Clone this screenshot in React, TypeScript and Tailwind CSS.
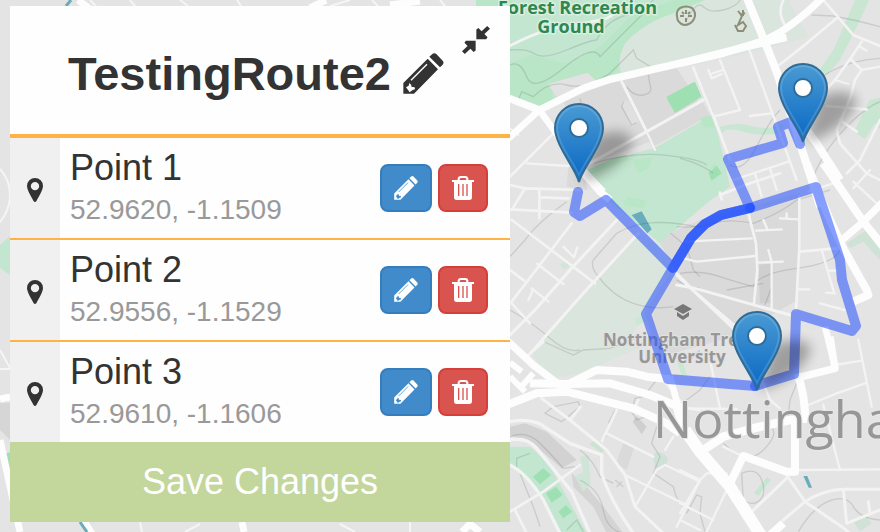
import React, { useState } from "react";

type Line = [number, string];
type Area = [string, string];

/* Each sheet is drawn at three units to the pixel from its own origin. */
interface Sheet {
  x: number;
  y: number;
  areas: Area[];
  contours: string[];
  minor: Line[];
  major: Line[];
}

const PARK = "#c3e6d0";
const WOOD = "#b9e6c6";
const PITCH = "#9fe0b3";
const COMMON = "#dae5dd";
const BUILT = "#dadada";
const WATER = "#69adbd";

const sheets: Sheet[] = [
  {
    x: 500,
    y: 0,
    areas: [
      [PARK, "M-10 -10H760L740 60L600 160L330 235L118 325L20 290Z"],
      [WOOD, "M20 195L90 165L200 190L300 140L380 60L430 30L560 -10H640L540 50L440 90L380 130L350 215L290 245L265 218L150 250L160 300L120 322L20 290Z"],
      [COMMON, "M375 130Q430 70 520 40L640 -10L860 -10L925 110L740 160L560 200L370 228Q345 190 375 130Z"],
      ["#e2e2e2", "M145 252L262 218L290 244L175 300Z"],
      [BUILT, "M190 305L330 245L530 205L560 250L610 330L450 425L270 490L240 400Z"],
      [BUILT, "M430 405L605 300L630 345L460 440Z"],
      ["#e0e0e0", "M362 310L385 300L418 365L395 378Z"],
      [PARK, "M255 510L300 500L400 460L460 446L635 345L655 405L690 560L620 610L480 730L300 580Z"],
      [WOOD, "M600 355L632 345L645 385L610 380Z"],
      [WOOD, "M405 480L455 470L450 500L420 520L402 500Z"],
      [WOOD, "M350 470L380 465L385 480L270 525L262 510Z"],
      [PITCH, "M500 295L580 247L600 290L525 338Z"],
    ],
    contours: [
      "M30 150Q80 145 105 162T200 150T290 120Q320 60 380 45T460 0",
      "M30 195Q60 180 80 230T190 205T300 170L350 120L450 20",
      "M55 300L65 275L100 290Q150 240 200 255T330 220L400 150L410 175L455 202",
      "M280 490Q400 455 500 466T620 495",
      "M370 305L365 320L395 375L410 368",
      "M380 260Q400 290 430 285T450 255L445 225",
      "M240 295L245 320",
    ],
    minor: [
      [8, "M25 140Q120 90 190 80T320 55L400 10"],
      [9, "M365 245L440 395"],
      [9, "M270 490L440 395L610 300"],
      [6, "M440 395L465 450"],
      [6, "M580 200L600 250L690 480"],
      [6, "M30 385L55 405"],
      [8, "M30 530L160 400"],
      [7, "M80 490L205 498"],
    ],
    major: [
      [22, "M20 292L118 330L250 265L330 238L560 185L740 140L860 112"],
      [20, "M118 330L20 420"],
      [20, "M118 330L165 395L240 500L310 575"],
    ],
  },
  {
    x: 680,
    y: 0,
    areas: [
      ["#c9e6d2", "M530 -10H572L545 50L480 180L440 225L415 215L460 150Z"],
      ["#c9e6d2", "M568 300L610 290V400L585 370L555 418L522 395Z"],
      ["#c9e6d2", "M120 380Q170 365 215 378T310 375L300 400Q240 410 190 395T125 400Z"],
      [PITCH, "M-40 290L45 245L65 290L-15 338Z"],
      [WOOD, "M85 510L105 490L127 518L100 540Z"],
    ],
    contours: [
      "M395 45L460 48Q530 60 600 80",
      "M600 175Q520 180 460 210T360 320",
      "M600 305Q560 320 510 370T430 470T400 540",
      "M20 60Q50 0 70 20T130 30T180 0",
      "M150 495Q190 520 230 440T300 330",
      "M0 475Q60 490 100 520",
    ],
    minor: [
      [8, "M310 0Q290 40 318 80"],
      [8, "M430 0L520 105L600 138"],
      [8, "M470 55L380 130L298 195"],
      [8, "M545 125L515 170L465 240L400 310"],
      [8, "M515 180L545 210L525 240L512 290L470 390L480 430L560 520"],
      [7, "M545 210L600 200M540 140L560 152M465 240L505 252"],
      [8, "M440 318L560 328M480 360L530 395"],
      [8, "M600 360L540 480L500 520"],
      [7, "M40 205L100 350L180 330L120 180"],
      [7, "M85 210L95 235L125 222M92 222L128 210"],
      [7, "M208 150L350 540"],
      [7, "M210 348L275 340M100 345L150 480"],
      [7, "M160 540L325 485M225 520L245 590M270 505L290 570"],
    ],
    major: [
      [24, "M195 -20L250 115L290 215L350 400L395 540L420 620"],
      [22, "M0 190L130 160L250 122Q330 90 430 -10"],
      [24, "M365 370L410 430L480 540"],
    ],
  },
  {
    x: 500,
    y: 170,
    areas: [
      [COMMON, "M410 195L480 220L510 300L435 425L400 490L260 560L150 640L90 540L250 375Z"],
      [BUILT, "M510 190L600 150L900 70L910 380L700 500L480 560L435 430L520 290L480 220Z"],
      [BUILT, "M205 -10H250L262 60L200 50Z"],
      [WOOD, "M380 82L440 92L430 116L370 104Z"],
      [WATER, "M395 135L425 124L455 178L442 190Z"],
      ["#c9e9d4", "M405 445L430 435L435 455L410 467Z"],
      ["#d2e5d8", "M180 282L200 275L208 290L190 298Z"],
    ],
    contours: [
      "M30 260L75 210Q110 160 200 95",
      "M600 172Q520 155 460 158T350 190L280 270Q270 290 295 320Q340 380 400 400T520 410",
      "M30 420Q100 460 150 505T240 540",
      "M512 190L560 230L580 300L600 320M530 330Q560 350 600 355",
    ],
    minor: [
      [8, "M30 45L75 55L240 60M75 55L35 120M118 58V145M118 82L205 85"],
      [8, "M30 118L215 128"],
      [8, "M35 150L75 180L285 340"],
      [9, "M350 150L210 300L105 420L30 495"],
      [8, "M215 160L35 395M112 282L190 342M30 300L72 332M35 400L90 460"],
      [7, "M190 230L222 262L232 232M95 355L145 395M100 358L85 390"],
      [9, "M415 190L250 370L95 545"],
      [8, "M520 300L585 365L720 480"],
    ],
    major: [[22, "M225 -20L300 65L330 90"]],
  },
  {
    x: 680,
    y: 170,
    areas: [
      ["#cfcfcf", "M235 285L280 280L275 400L240 400Z"],
      [PITCH, "M85 10L110 -12L125 10L95 32Z"],
      ["#cfe2d6", "M500 220L560 180L600 240V270L550 215L510 235Z"],
      ["#e4e4e4", "M358 60L450 60L490 240L520 440L350 430Z"],
    ],
    contours: [
      "M-10 170Q50 175 100 160T220 160Q300 130 350 90L450 60",
      "M0 310Q60 300 120 320T220 350Q235 310 350 295T480 240",
      "M140 360L250 340M255 405L275 350",
    ],
    minor: [
      [8, "M120 75L195 45L300 10M120 68L125 88"],
      [8, "M200 110L228 220L232 300L222 400"],
      [7, "M10 215L215 205M10 265L50 275L225 258"],
      [7, "M228 182L305 178M250 150L262 178M300 145L355 148M320 130V145"],
      [7, "M232 278L308 275M265 240L275 275V415"],
      [8, "M358 80V230L348 420M358 245L470 235"],
      [7, "M425 240L462 368M438 368L465 370M445 302L470 302M355 358L388 358M420 400L495 420"],
      [9, "M-10 345L45 355L330 435"],
      [9, "M-10 315L160 475"],
      [7, "M385 65L460 40M520 35L600 110M520 55L570 0M560 10L600 30"],
    ],
    major: [
      [24, "M380 -20L410 55L450 150L490 235L560 360L565 375L520 395"],
      [24, "M430 -20L550 155L610 230"],
      [22, "M610 95L550 155L480 215"],
      [20, "M435 470L465 590"],
    ],
  },
  {
    x: 500,
    y: 340,
    areas: [
      [COMMON, "M100 35L240 -30L430 20L380 40L250 95L190 112Z"],
      ["#d2d2d2", "M30 260L75 250L140 275L230 360L185 385L110 320L30 285Z"],
      ["#d4d4d4", "M215 400L260 440L310 500L370 580H320L280 500L220 440Z"],
      [PARK, "M30 320L90 320L145 370L260 580H180L100 440L30 375Z"],
      [PITCH, "M98 410L130 385L153 405L120 433Z"],
      [PITCH, "M138 460L168 440L188 465L155 488Z"],
      [PITCH, "M175 515L198 495L217 515L190 535Z"],
      ["#c9e4d2", "M268 312L282 302L315 328L305 338Z"],
      ["#cfe5d7", "M240 350L265 345L272 430L250 455L225 410L250 395Z"],
      [BUILT, "M370 310L403 322L380 390L348 370Z"],
      ["#cfcfcf", "M398 245L410 228L440 260L425 283Z"],
      ["#c6e9d1", "M530 60L548 65L560 105L545 105Z"],
      ["#d0e2d7", "M458 345Q480 325 505 355L495 382L465 385Z"],
    ],
    contours: [
      "M120 0L220 45L250 30L330 25L420 -10",
      "M135 220L160 200L235 185L240 200L185 245Z",
      "M30 290Q80 270 120 310T190 385L225 380",
      "M240 420Q300 450 310 510T370 580",
      "M240 330Q280 360 300 410L340 430",
      "M470 120L430 170L405 175L395 215L410 240L440 230",
      "M50 385L50 355L90 340M60 400L100 500L120 560",
      "M345 420L370 440M350 440L365 425",
      "M470 260L455 310L480 350L460 400L520 440Q530 490 560 510",
      "M200 570L230 540L250 575",
      "M325 250L345 210M300 310L320 285",
      "M570 60L600 30",
    ],
    minor: [
      [9, "M125 175L210 240L320 330L375 405L405 500L490 580"],
      [8, "M210 240L242 200M350 210L305 305M320 280L460 350M415 180L400 215"],
      [10, "M30 245Q80 235 120 252L210 310L305 345"],
      [10, "M30 300Q80 290 110 325L215 455L270 580"],
      [10, "M30 375Q80 400 130 480L180 580"],
      [8, "M30 515L130 455L240 375M45 510L80 580"],
      [10, "M305 345V400Q330 480 400 580"],
      [7, "M375 405L560 495M405 500L470 390L495 375L600 425M495 330L520 290"],
      [7, "M600 420L530 560M540 540L600 570"],
      [7, "M490 120L560 205L600 210"],
      [9, "M80 50L130 5"],
    ],
    major: [
      [22, "M25 5L100 75L185 140"],
      [18, "M30 110L75 155M100 100L60 145M30 68L65 95"],
      [24, "M20 195L110 160L200 155L400 205L500 250L540 280"],
      [24, "M90 130L200 132L330 130L450 165L560 210"],
      [24, "M200 135L290 90L380 95L440 110L510 118"],
      [20, "M510 110L540 220"],
    ],
  },
  {
    x: 680,
    y: 340,
    areas: [
      ["#c7e6d1", "M222 458L262 410L272 420L235 468Z"],
      [WATER, "M370 408H382L396 443H386Z"],
      ["#d0e2d7", "M520 545L560 530L575 550L540 575Z"],
    ],
    contours: [
      "M185 400Q230 380 245 420T240 480T190 480Z",
      "M355 575Q400 500 450 482T520 500T600 540",
      "M20 520L50 465L65 470L60 520L75 575",
      "M130 310Q200 380 250 330T270 260",
      "M350 130L330 180L325 230",
      "M0 195L60 150L90 110",
    ],
    minor: [
      [7, "M90 60L120 205M0 205L170 207M240 105L270 180L300 205"],
      [7, "M535 0L575 200M465 75L545 62M385 195L470 160L555 130"],
      [7, "M350 390L600 388M430 195L480 390"],
      [9, "M320 405L375 485L485 560L510 580M325 410L210 520"],
      [9, "M310 540L375 485Q430 450 490 448L600 448M490 448L500 550L600 510M565 485L570 520"],
      [7, "M0 390L60 420L80 400L140 400M60 420L0 520M0 490L100 540M80 575L140 450"],
      [7, "M130 320L180 345M35 320L35 290"],
    ],
    major: [
      [36, "M15 270L60 335L150 440L245 590"],
      [26, "M70 330L130 290L220 265L330 240L380 235"],
      [24, "M150 430L190 348L320 395H345V240"],
      [24, "M355 100L370 170L378 240"],
      [22, "M345 115L465 85L450 -10"],
      [24, "M265 590L310 550"],
      [24, "M-10 200L15 290"],
    ],
  },
];

function MapMarker({ x, y, id }: { x: number; y: number; id: string }) {
  return (
    <g transform={`translate(${x} ${y})`}>
      <path
        d="M2 -2L16 -46Q46 -58 54 -42Q48 -20 14 -4Z"
        fill="#000"
        opacity="0.3"
        filter="url(#soft)"
      />
      <path
        d="M0 -1C-3 -14 -24 -38 -24 -55A24 24 0 0 1 24 -55C24 -38 3 -14 0 -1Z"
        fill={`url(#${id})`}
        stroke="#2e6c97"
        strokeWidth="2"
      />
      <path
        d="M0 -8C-5 -20 -22 -40 -22 -55A22 22 0 0 1 22 -55C22 -40 5 -20 0 -8Z"
        fill="none"
        stroke="#fff"
        strokeOpacity="0.14"
        strokeWidth="2"
      />
      <circle cy="-55" r="9" fill="#fff" stroke="#2e6c97" strokeWidth="2" />
      <linearGradient id={id} x1="0" y1="0" x2="0" y2="1">
        <stop offset="0" stopColor="#4a9bd3" />
        <stop offset="0.85" stopColor="#126fc6" />
      </linearGradient>
    </g>
  );
}

function CityMap() {
  const place = (s: Sheet) => `translate(${s.x} ${s.y}) scale(0.33333)`;
  return (
    <svg
      className="absolute inset-0 h-full w-full"
      viewBox="0 0 880 532"
      preserveAspectRatio="xMinYMin slice"
      role="img"
      aria-label="Map of Nottingham"
    >
      <defs>
        <filter id="soft" x="-50%" y="-50%" width="200%" height="200%">
          <feGaussianBlur stdDeviation="6" />
        </filter>
      </defs>
      <rect width="880" height="532" fill="#e4e4e4" />

      {sheets.map((s, i) => (
        <g key={i} transform={place(s)}>
          {s.areas.map(([fill, d], j) => (
            <path key={j} d={d} fill={fill} />
          ))}
        </g>
      ))}
      {sheets.map((s, i) => (
        <g key={i} transform={place(s)} fill="none" stroke="#000" strokeOpacity="0.11" strokeWidth="4">
          {s.contours.map((d, j) => (
            <path key={j} d={d} />
          ))}
        </g>
      ))}
      {sheets.map((s, i) => (
        <g key={i} transform={place(s)} fill="none" stroke="#f3f3f3" strokeLinejoin="round" strokeLinecap="round">
          {s.minor.map(([w, d], j) => (
            <path key={j} d={d} strokeWidth={w} />
          ))}
        </g>
      ))}
      {sheets.map((s, i) => (
        <g key={i} transform={place(s)} fill="none" stroke="#fdfdfd" strokeLinejoin="round">
          {s.major.map(([w, d], j) => (
            <path key={j} d={d} strokeWidth={w} />
          ))}
        </g>
      ))}

      {/* western and northern fringe */}
      <path d="M0 245L10 236V275L0 268Z" fill={PARK} />
      <path d="M3 455L10 452V473Z" fill={PITCH} />
      <path d="M0 403H10V440L0 430Z" fill="#d6d6d6" />
      <path d="M476 0H512V8H476Z" fill={WOOD} />
      <g fill="none" stroke="#f5f5f5" strokeWidth="2">
        <path d="M0 169Q10 180 10 195T0 222M0 350L10 368M0 369H10M90 0L96 6M130 0L135 6M180 0L188 6M237 0L241 6M330 6L350 0M372 0L378 6M440 0L445 6M140 522L142 532M185 532L200 524M340 524L355 532M410 522V532" />
      </g>
      <g fill="none" stroke="#fdfdfd" strokeWidth="7">
        <path d="M0 399L10 397M0 440L20 532M78 0L94 12M242 522L244 532M80 515L96 540M310 8L326 0M462 532L470 524L480 532M390 5L420 1" />
      </g>
      <path d="M80 522L87 532M66 6L71 0" stroke={WATER} strokeWidth="3" />

      {/* map symbols */}
      <g fill="none" stroke="#8f8d78" strokeWidth="2">
        <path d="M680 8Q686 5 692 8Q697 13 694 19Q691 25 684 25Q677 23 677 16Q676 11 680 8Z" />
        <path d="M686 10V14M686 18V22M680 16H684M688 16H692M682 12L684 14M690 12L688 14" />
        <path d="M735 25L738 31H743L746 26L743 22L738 25L742 16L738 11M740 15L745 13M743 10V16" />
      </g>
      <g fill="#777">
        <path d="M683 304L692 309L683 314L674 309Z" />
        <path d="M677 312L683 316L689 312V316L683 320L677 316Z" />
      </g>

      <g fontFamily="'Open Sans', 'Noto Sans', sans-serif">
        <g
          fontSize="18"
          fontWeight="700"
          fill="#2f874f"
          stroke="#d9efe0"
          strokeWidth="3"
          strokeLinejoin="round"
          paintOrder="stroke"
        >
          <text x="657" y="14" textAnchor="end">
            Forest Recreation
          </text>
          <text x="571" y="33" textAnchor="middle">
            Ground
          </text>
        </g>
        <g
          fontSize="17"
          fontWeight="700"
          fill="#979797"
          stroke="#e2e2e2"
          strokeWidth="2"
          strokeLinejoin="round"
          paintOrder="stroke"
        >
          <text x="603" y="346">
            Nottingham Trent
          </text>
          <text x="682" y="363" textAnchor="middle">
            University
          </text>
        </g>
      </g>
      <text
        x="653"
        y="438"
        fontFamily="'Open Sans', 'Noto Sans', sans-serif"
        fontSize="52"
        fill="#979797"
        stroke="#e8e8e8"
        strokeWidth="2"
        paintOrder="stroke"
      >
        Nottingham
      </text>

      <g
        fill="none"
        stroke="#1c4bff"
        strokeOpacity="0.53"
        strokeWidth="10"
        strokeLinecap="round"
        strokeLinejoin="round"
      >
        <path d="M578 192L574 212L580 216L606 200L673 268L691 238L705 224L721 215L750 208L728 159L783 143L778 127L791 122L800 144" />
        <path d="M750 208L816 187L840 260L842 280L856 326L852 331L796 314L794 374L755 386" />
        <path d="M755 386L668 379L646 314L673 268L691 238L705 224L721 215L750 208" />
        <path d="M673 268L691 238L705 224L721 215L750 208" strokeOpacity="0.3" />
      </g>

      <MapMarker id="pinWest" x={579} y={183} />
      <MapMarker id="pinNorth" x={803} y={143} />
      <MapMarker id="pinSouth" x={757} y={391} />
    </svg>
  );
}

function Pencil({ className, cut }: { className: string; cut: string }) {
  return (
    <svg viewBox="0 0 123 123" className={className} aria-hidden="true">
      <path
        fill="currentColor"
        d="M1 122V90L74 17L105 49L33 122ZM79 11L88 3Q94 -2 100 3L119 23Q124 29 119 35L111 43Z"
      />
      <path d="M24 82L72 34" stroke={cut} strokeWidth="4" />
      <path
        fill={cut}
        d="M9 103L17 98L19 90L25 96V101L35 103L36 109L29 111L20 118Z"
      />
    </svg>
  );
}

function Trash() {
  return (
    <svg viewBox="0 0 66 72" className="h-6 w-[22px]" aria-hidden="true">
      <path
        fill="currentColor"
        fillRule="evenodd"
        d="M0 12H17V7Q19 0 26 0H40Q47 0 49 7V12H66V18H60V64Q60 72 52 72H14Q6 72 6 64V18H0ZM23 12H43V9Q42 6 39 6H27Q24 6 23 9ZM18 24V60H22V24ZM31 24V60H35V24ZM43 24V60H47V24Z"
      />
    </svg>
  );
}

function Pin() {
  return (
    <svg viewBox="0 0 48 72" className="h-6 w-4" aria-hidden="true">
      <path
        fill="currentColor"
        fillRule="evenodd"
        d="M24 0A24 24 0 0 1 48 24C48 36 36 54 28 70Q24 74 20 70C12 54 0 36 0 24A24 24 0 0 1 24 0ZM24 12A12.500 12.500 0 1 0 24 37A12.500 12.500 0 1 0 24 12Z"
      />
    </svg>
  );
}

function Compress() {
  const arrow = "M72 0L80 8L64 23L73 32L69 38H41V10L47 6L56 15Z";
  return (
    <svg viewBox="0 0 80 80" className="size-7" aria-hidden="true">
      <path d={arrow} fill="currentColor" />
      <path d={arrow} fill="currentColor" transform="rotate(180 40 40)" />
    </svg>
  );
}

const initialPoints = [
  { name: "Point 1", position: "52.9620, -1.1509" },
  { name: "Point 2", position: "52.9556, -1.1529" },
  { name: "Point 3", position: "52.9610, -1.1606" },
];

export default function App() {
  const [points, setPoints] = useState(initialPoints);
  const [open, setOpen] = useState(true);

  return (
    <main className="relative min-h-screen overflow-hidden bg-[#e4e4e4] px-2.5 pt-1.5 pb-2.5 font-['Liberation_Sans',Arial,sans-serif] text-[#333]">
      <CityMap />
      <section className="relative w-full max-w-[500px] bg-[#fefefe]">
        <header className="flex h-[132px] justify-between border-b-4 border-[#ffb347] pr-5 pl-[58px]">
          <div className="flex items-center gap-3 pt-1.5">
            <h1 className="text-[47px] leading-none font-bold">TestingRoute2</h1>
            <button type="button" aria-label="Rename route">
              <Pencil className="size-[41px]" cut="#fefefe" />
            </button>
          </div>
          <button
            type="button"
            aria-label="Collapse panel"
            onClick={() => setOpen(!open)}
            className="mt-5 self-start"
          >
            <Compress />
          </button>
        </header>
        {open && (
          <ul className="divide-y-2 divide-[#ffb347]">
            {points.map((p, i) => (
              <li key={p.name} className={i < points.length - 1 ? "flex h-[102px]" : "flex h-[100px]"}>
                <div className="flex w-[50px] items-center justify-center bg-[#f0f0f0] pt-1">
                  <Pin />
                </div>
                <div className="flex flex-1 flex-col pt-2.5 pl-2.5">
                  <span className="text-4xl leading-10">{p.name}</span>
                  <span className="text-[28px] leading-11 text-[#999]">{p.position}</span>
                </div>
                <div className="flex items-center gap-1.5 pr-[22px]">
                  <button
                    type="button"
                    aria-label={`Edit ${p.name}`}
                    className="flex h-12 w-[52px] items-center justify-center rounded-lg border-2 border-[#357ebd] bg-[#428bca] text-white"
                  >
                    <Pencil className="size-6" cut="#428bca" />
                  </button>
                  <button
                    type="button"
                    aria-label={`Delete ${p.name}`}
                    onClick={() => setPoints(points.filter((q) => q !== p))}
                    className="flex h-12 w-[50px] items-center justify-center rounded-lg border-2 border-[#d43f3a] bg-[#d9534f] text-white"
                  >
                    <Trash />
                  </button>
                </div>
              </li>
            ))}
          </ul>
        )}
        <button type="button" className="h-20 w-full bg-[#c3d69b] text-4xl text-white">
          Save Changes
        </button>
      </section>
    </main>
  );
}
